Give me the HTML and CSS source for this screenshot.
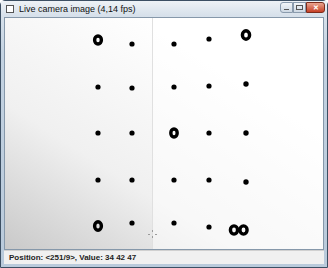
FILE: index.html
```html
<!DOCTYPE html>
<html lang="en">
<head>
    <meta charset="UTF-8">
    <title>Live camera image</title>
    <link rel="stylesheet" href="styles.css">
</head>
<body>
    <div class="window">
        <div class="titlebar">
            <span class="app-icon"></span>
            <span class="title">Live camera image (4,14 fps)</span>
            <div class="controls">
                <span class="btn min"><i></i></span>
                <span class="btn max"><i></i></span>
                <span class="btn close">&#x2715;</span>
            </div>
        </div>
        <div class="client">
            <svg class="view" width="320" height="234" viewBox="0 0 320 234">
                <defs>
                    <linearGradient id="shade" x1="0" y1="1" x2="0.7" y2="0.2">
                        <stop offset="0" stop-color="#c8c8c8"/>
                        <stop offset="0.45" stop-color="#f0f0f0"/>
                        <stop offset="1" stop-color="#ffffff"/>
                    </linearGradient>
                </defs>
                <rect width="320" height="234" fill="url(#shade)"/>
                <rect x="147" width="173" height="234" fill="#fff" opacity="0.5"/>
                <line x1="147.5" y1="0" x2="147.5" y2="234" stroke="#e0e0e0"/>
                <g fill="none" stroke="#000" stroke-width="3.4">
                    <ellipse cx="93" cy="22" rx="3.4" ry="4"/>
                    <ellipse cx="241" cy="17" rx="3.6" ry="4.2"/>
                    <ellipse cx="169" cy="115" rx="3.2" ry="4"/>
                    <ellipse cx="93" cy="208" rx="3.4" ry="4.2"/>
                    <ellipse cx="229" cy="212" rx="3.6" ry="4.1"/>
                    <ellipse cx="238.5" cy="212" rx="3.6" ry="4.1"/>
                </g>
                <g fill="#000">
                    <circle cx="127" cy="26" r="2.6"/>
                    <circle cx="169" cy="26" r="2.6"/>
                    <circle cx="204" cy="21" r="2.6"/>
                    <circle cx="93" cy="69" r="2.6"/>
                    <circle cx="127" cy="70" r="2.6"/>
                    <circle cx="169" cy="69" r="2.6"/>
                    <circle cx="204" cy="68" r="2.6"/>
                    <circle cx="241" cy="66" r="2.7"/>
                    <circle cx="93" cy="115" r="2.6"/>
                    <circle cx="127" cy="115" r="2.6"/>
                    <circle cx="204" cy="115" r="2.6"/>
                    <circle cx="241" cy="115" r="2.7"/>
                    <circle cx="93" cy="162" r="2.6"/>
                    <circle cx="127" cy="162" r="2.6"/>
                    <circle cx="169" cy="162" r="2.6"/>
                    <circle cx="204" cy="162" r="2.6"/>
                    <circle cx="241" cy="164" r="2.7"/>
                    <circle cx="127" cy="205" r="2.6"/>
                    <circle cx="169" cy="205" r="2.6"/>
                    <circle cx="204" cy="209" r="2.6"/>
                </g>
                <g stroke="#9a9a9a" stroke-width="1">
                    <line x1="147.5" y1="212" x2="147.5" y2="214"/>
                    <line x1="147.5" y1="218" x2="147.5" y2="220"/>
                    <line x1="143" y1="216.5" x2="145" y2="216.5"/>
                    <line x1="150" y1="216.5" x2="152" y2="216.5"/>
                </g>
            </svg>
        </div>
        <div class="statusbar">Position: &lt;251/9&gt;, Value: 34 42 47</div>
    </div>
</body>
</html>
```
FILE: styles.css
```css
body {
    margin: 0;
    background: #fff;
    font-family: "Liberation Sans", Arial, sans-serif;
}
.window {
    width: 328px;
    height: 268px;
    box-sizing: border-box;
    border: 1px solid #3c4f63;
    border-radius: 5px 5px 0 0;
    background: linear-gradient(to bottom, #dfe7ef, #c3d2e1 20%, #b9cadb);
    display: flex;
    flex-direction: column;
    padding: 0 3px 3px 3px;
}
.titlebar {
    height: 15px;
    display: flex;
    align-items: center;
    gap: 5px;
    background: linear-gradient(to bottom, #eef2f6, #d6e0ea);
    margin: 0 -3px;
    padding: 0 2px 0 5px;
}
.app-icon {
    width: 6px;
    height: 6px;
    border: 1px solid #555;
    background: #fff;
}
.title {
    font-size: 9px;
    color: #111;
    flex: 1;
}
.controls {
    display: flex;
    align-self: flex-start;
    margin-top: 1px;
}
.btn {
    height: 11px;
    width: 13px;
    box-sizing: border-box;
    border: 1px solid #8a9bad;
    background: linear-gradient(to bottom, #f2f5f8, #cdd8e3);
    display: flex;
    align-items: center;
    justify-content: center;
}
.btn.min {
    border-radius: 3px 0 0 3px;
}
.btn.min i {
    width: 5px;
    height: 1px;
    background: #555;
    margin-top: 3px;
}
.btn.max i {
    width: 5px;
    height: 3px;
    border: 1px solid #555;
}
.btn.close {
    width: 19px;
    border-radius: 0 3px 3px 0;
    background: linear-gradient(to bottom, #e9a48f, #c63f25);
    border-color: #7c2c1c;
    color: #fff;
    font-size: 7px;
    font-weight: bold;
}
.client {
    flex: 1;
    background: #fff;
    border: 1px solid #8698aa;
    margin-top: 1px;
    overflow: hidden;
}
.view {
    display: block;
}
.statusbar {
    height: 13px;
    background: #f0f0f0;
    border-top: 1px solid #d0d0d0;
    font-size: 8px;
    font-weight: bold;
    color: #222;
    padding-left: 5px;
    line-height: 13px;
}
```
